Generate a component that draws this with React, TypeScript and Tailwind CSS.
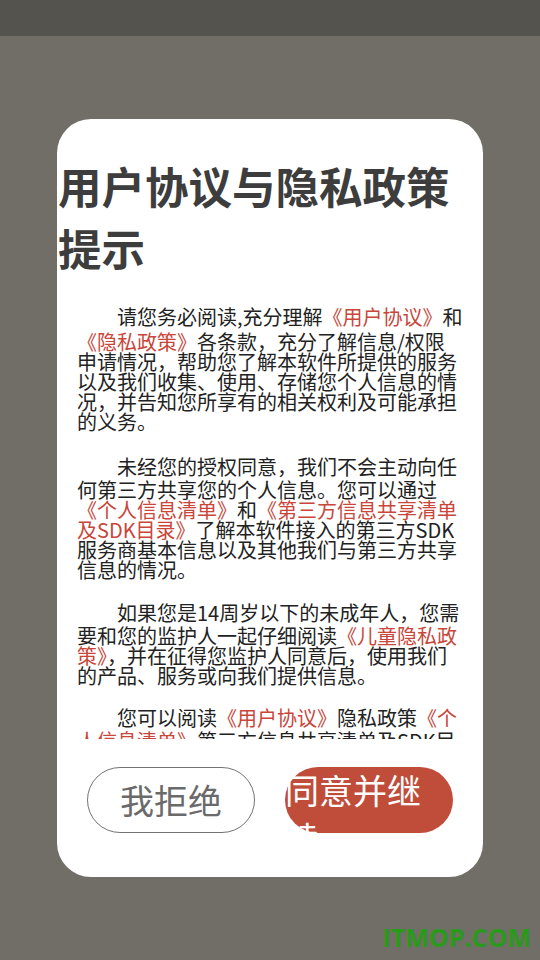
type Seg = { text: string; link?: boolean };
type Para = { first: number; gap: number; lines: Seg[][] };

const t = (text: string): Seg => ({ text });
const l = (text: string): Seg => ({ text, link: true });

// line breaks follow the screenshot, Android wraps CJK anywhere
const paragraphs: Para[] = [
  {
    first: 25,
    gap: 25,
    lines: [
      [t("　　请您务必阅读,充分理解"), l("《用户协议》"), t("和")],
      [l("《隐私政策》"), t("各条款，充分了解信息/权限")],
      [t("申请情况，帮助您了解本软件所提供的服务")],
      [t("以及我们收集、使用、存储您个人信息的情")],
      [t("况，并告知您所享有的相关权利及可能承担")],
      [t("的义务。")],
    ],
  },
  {
    first: 23,
    gap: 23,
    lines: [
      [t("　　未经您的授权同意，我们不会主动向任")],
      [t("何第三方共享您的个人信息。您可以通过")],
      [l("《个人信息清单》"), t("和"), l("《第三方信息共享清单")],
      [l("及SDK目录》"), t("了解本软件接入的第三方SDK")],
      [t("服务商基本信息以及其他我们与第三方共享")],
      [t("信息的情况。")],
    ],
  },
  {
    first: 23,
    gap: 22,
    lines: [
      [t("　　如果您是14周岁以下的未成年人，您需")],
      [t("要和您的监护人一起仔细阅读"), l("《儿童隐私政")],
      [l("策》"), t("，并在征得您监护人同意后，使用我们")],
      [t("的产品、服务或向我们提供信息。")],
    ],
  },
  {
    first: 23,
    gap: 0,
    lines: [
      [t("　　您可以阅读"), l("《用户协议》"), t("隐私政策"), l("《个")],
      [l("人信息清单》"), t("第三方信息共享清单及SDK目")],
    ],
  },
];

function Line({ segs, height }: { segs: Seg[]; height: number }) {
  return (
    <div className="whitespace-nowrap leading-[20px]" style={{ height }}>
      {segs.map((s, i) =>
        s.link ? (
          <span key={i} className="text-[#c8463a]">
            {s.text}
          </span>
        ) : (
          <span key={i}>{s.text}</span>
        )
      )}
    </div>
  );
}

export default function App() {
  return (
    <div className="relative h-[960px] w-full overflow-hidden bg-[#716e67] font-['Noto_Sans_CJK_SC',sans-serif]">
      <div className="h-[36px] bg-[#55534d]" />

      <div className="mx-auto mt-[83px] flex h-[758px] w-[426px] flex-col rounded-[34px] bg-white pt-[36px]">
        <h1 className="pl-[1px] text-[43.5px] font-bold leading-[62px] text-[#3d3d3d]">用户协议与隐私政策提示</h1>

        <div className="h-[460px] overflow-hidden pl-[20px] pr-[20px] pt-[28px] text-[20px] text-[#222]">
          {paragraphs.map((p, pi) => (
            <div key={pi} style={{ marginBottom: p.gap }}>
              {p.lines.map((segs, li) => (
                <Line key={li} segs={segs} height={li === 0 ? p.first : 20} />
              ))}
            </div>
          ))}
        </div>

        <div className="mt-[28px] flex justify-between px-[30px]">
          <div className="flex h-[66px] w-[168px] items-center justify-center rounded-full border border-[#737373] text-[34px] leading-none text-[#6a6a6a]">
            我拒绝
          </div>
          <div className="flex h-[66px] w-[168px] items-start rounded-full bg-[#c04c3a]">
            <span className="-mt-[1px] block w-full text-left text-[34px] leading-[48px] text-white">
              同意并继续
            </span>
          </div>
        </div>
      </div>

      <div className="absolute bottom-[10px] right-[9px] font-['Open_Sans',sans-serif] text-[25px] font-bold leading-none text-[#2a9a1a]">
        ITMOP.COM
      </div>
    </div>
  );
}
